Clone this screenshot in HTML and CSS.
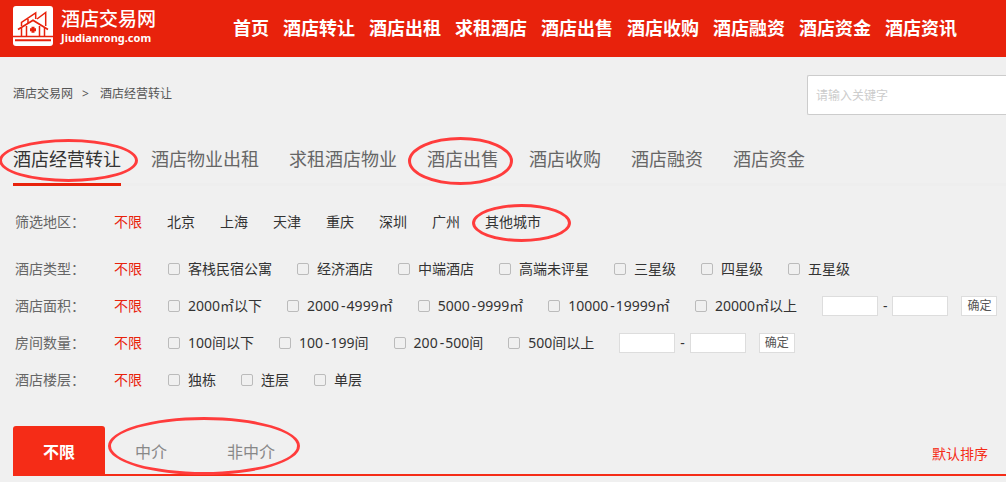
FILE: index.html
```
<!DOCTYPE html>
<html lang="zh-CN">
<head>
    <meta charset="utf-8">
    <title>酒店经营转让 - 酒店交易网</title>
    <link rel="stylesheet" href="styles.css">
</head>
<body>
    <header class="header">
        <a class="logo" href="#">
            <svg class="logo-icon" viewBox="0 0 40 40" width="40" height="40">
                <rect width="40" height="40" rx="3" fill="#fff"/>
                <g fill="none" stroke="#e8220c" stroke-width="1.5">
                    <path d="M0 30.5H40"/>
                    <path d="M2 34.2H38" stroke-width="2"/>
                    <path d="M5 23.500L20 14.300L35 23.500" stroke-width="1.800"/>
                    <path d="M8.500 22V30M13.500 20V30M26.500 20V30M31.500 22V30"/>
                    <path d="M8.500 20V16.500L22.700 7V13M15 17V13M24 13L32.700 6.500V20"/>
                </g>
                <path d="M18.500 20.700h3v1.500h1.500v3h-1.500v1.500h-3v-1.500h-1.500v-3h1.500z" fill="#e8220c"/>
            </svg>
            <span class="logo-text">
                <strong class="logo-name">酒店交易网</strong>
                <strong class="logo-domain">Jiudianrong.com</strong>
            </span>
        </a>
        <nav class="nav">
            <a href="#">首页</a>
            <a href="#">酒店转让</a>
            <a href="#">酒店出租</a>
            <a href="#">求租酒店</a>
            <a href="#">酒店出售</a>
            <a href="#">酒店收购</a>
            <a href="#">酒店融资</a>
            <a href="#">酒店资金</a>
            <a href="#">酒店资讯</a>
        </nav>
    </header>

    <main class="main">
        <div class="topbar">
            <div class="crumbs">
                <a href="#">酒店交易网</a>
                <span>&gt;</span>
                <a href="#">酒店经营转让</a>
            </div>
            <input class="search" type="text" placeholder="请输入关键字" aria-label="关键字">
        </div>

        <nav class="tabs">
            <a class="active circled circled-first" href="#">酒店经营转让</a>
            <a href="#">酒店物业出租</a>
            <a href="#">求租酒店物业</a>
            <a class="circled circled-sale" href="#">酒店出售</a>
            <a href="#">酒店收购</a>
            <a href="#">酒店融资</a>
            <a href="#">酒店资金</a>
        </nav>

        <div class="filters">
            <div class="row row-area">
                <span class="label">筛选地区：</span>
                <a class="all" href="#">不限</a>
                <a href="#">北京</a>
                <a href="#">上海</a>
                <a href="#">天津</a>
                <a href="#">重庆</a>
                <a href="#">深圳</a>
                <a href="#">广州</a>
                <a class="circled circled-city" href="#">其他城市</a>
            </div>
            <div class="row">
                <span class="label">酒店类型：</span>
                <a class="all" href="#">不限</a>
                <label><input type="checkbox">客栈民宿公寓</label>
                <label><input type="checkbox">经济酒店</label>
                <label><input type="checkbox">中端酒店</label>
                <label><input type="checkbox">高端未评星</label>
                <label><input type="checkbox">三星级</label>
                <label><input type="checkbox">四星级</label>
                <label><input type="checkbox">五星级</label>
            </div>
            <div class="row">
                <span class="label">酒店面积：</span>
                <a class="all" href="#">不限</a>
                <label><input type="checkbox">2000㎡以下</label>
                <label><input type="checkbox">2000<span class="dash">-</span>4999㎡</label>
                <label><input type="checkbox">5000<span class="dash">-</span>9999㎡</label>
                <label><input type="checkbox">10000<span class="dash">-</span>19999㎡</label>
                <label><input type="checkbox">20000㎡以上</label>
                <div class="range">
                    <input type="text" aria-label="最小面积">
                    <span>-</span>
                    <input type="text" aria-label="最大面积">
                    <button>确定</button>
                </div>
            </div>
            <div class="row">
                <span class="label">房间数量：</span>
                <a class="all" href="#">不限</a>
                <label><input type="checkbox">100间以下</label>
                <label><input type="checkbox">100<span class="dash">-</span>199间</label>
                <label><input type="checkbox">200<span class="dash">-</span>500间</label>
                <label><input type="checkbox">500间以上</label>
                <div class="range">
                    <input type="text" aria-label="最少房间">
                    <span>-</span>
                    <input type="text" aria-label="最多房间">
                    <button>确定</button>
                </div>
            </div>
            <div class="row">
                <span class="label">酒店楼层：</span>
                <a class="all" href="#">不限</a>
                <label><input type="checkbox">独栋</label>
                <label><input type="checkbox">连层</label>
                <label><input type="checkbox">单层</label>
            </div>
        </div>

        <div class="sortbar">
            <a class="active" href="#">不限</a>
            <div class="agents circled circled-agents">
                <a href="#">中介</a>
                <a href="#">非中介</a>
            </div>
            <a class="sort" href="#">默认排序</a>
        </div>
    </main>
</body>
</html>
```
FILE: styles.css
```
* {
    box-sizing: border-box;
}
body {
    margin: 0;
    background: #f0f0f0;
    color: #333;
    font-family: "Noto Sans", "Noto Sans CJK SC", sans-serif;
    font-size: 14px;
    line-height: 20px;
}
a {
    color: inherit;
    text-decoration: none;
}
.header {
    display: flex;
    height: 57px;
    padding: 6px 13px 0;
    background: #e8220c;
    color: #fff;
}
.logo {
    display: flex;
    gap: 8px;
    width: 220px;
}
.logo-icon {
    flex: none;
}
.logo-text {
    display: flex;
    flex-direction: column;
}
.logo-name {
    font-size: 19px;
    font-weight: 500;
    line-height: 26px;
}
.logo-domain {
    font-size: 11px;
    line-height: 12px;
}
.nav {
    display: flex;
    gap: 14px;
    font-size: 18px;
    font-weight: bold;
    line-height: 44px;
    white-space: nowrap;
}
.main {
    padding-left: 13px;
}
.topbar {
    display: flex;
    justify-content: space-between;
    padding-top: 18px;
}
.crumbs {
    display: flex;
    gap: 9px;
    font-size: 12px;
    line-height: 38px;
    color: #555;
}
.crumbs a:last-child {
    margin-left: 2px;
}
.search {
    width: 199px;
    height: 40px;
    padding: 0 8px;
    border: 1px solid #ccc;
    border-right: 0;
    border-radius: 2px 0 0 2px;
    background: #fff;
    font-family: inherit;
    font-size: 12px;
}
.search::placeholder {
    color: #ccc;
}
.tabs {
    display: flex;
    gap: 30px;
    margin-top: 20px;
    border-bottom: 3px solid #eee;
    font-size: 18px;
    color: #666;
}
.tabs a {
    margin-bottom: -3px;
    border-bottom: 3px solid transparent;
    line-height: 48px;
}
.tabs .active {
    border-color: #e8220c;
    color: #333;
}

/* filter rows */
.filters {
    padding-left: 2px;
}
.row {
    display: flex;
    flex-wrap: wrap;
    align-items: center;
    column-gap: 25px;
    min-height: 37px;
}
.row-area {
    min-height: 64px;
    padding-top: 8px;
}
.label {
    width: 74px;
    color: #666;
}
.all {
    color: #e8220c;
}
.row label {
    display: flex;
    align-items: center;
}
.all + label {
    margin-left: 1px;
}
.row input[type="checkbox"] {
    appearance: none;
    width: 12px;
    height: 12px;
    margin: 0 8px 0 0;
    border: 1px solid #bbb;
    border-radius: 2px;
}
.row input[type="checkbox"]:checked {
    background: #e8220c;
}
.dash {
    margin: 0 1px 0 2px;
}
.range {
    display: flex;
    align-items: center;
    gap: 5px;
}
.range input {
    width: 56px;
    height: 20px;
    padding: 0 4px;
    border: 1px solid #ddd;
}
.range button {
    width: 36px;
    height: 20px;
    margin-left: 8px;
    padding: 0;
    border: 1px solid #ddd;
    background: #fff;
    color: #555;
    font-family: inherit;
    font-size: 12px;
    line-height: 18px;
}

.sortbar {
    display: flex;
    margin-top: 28px;
    border-bottom: 2px solid #f52c17;
    font-size: 16px;
    line-height: 44px;
    color: #888;
}
.sortbar a {
    padding: 4px 30px 0;
}
.sortbar .active {
    border-radius: 3px 3px 0 0;
    background: #f52c17;
    color: #fff;
    font-weight: bold;
}
.agents {
    display: flex;
}
.sortbar .sort {
    margin-left: auto;
    padding: 8px 18px 0 0;
    color: #f52c17;
    font-size: 14px;
    line-height: 40px;
}

/* hand-drawn style circles over the entries */
.circled {
    position: relative;
}
.circled::after {
    content: "";
    position: absolute;
    border: 3px solid #ff3c3c;
    border-radius: 50%;
    pointer-events: none;
}
.circled-first::after {
    inset: 4px -17px 1px -14px;
}
.circled-sale::after {
    inset: 2px -14px -2px -19px;
}
.circled-city::after {
    inset: -8px -30px -10px -13px;
}
.circled-agents::after {
    inset: -9px 5px -1px 3px;
}
```
